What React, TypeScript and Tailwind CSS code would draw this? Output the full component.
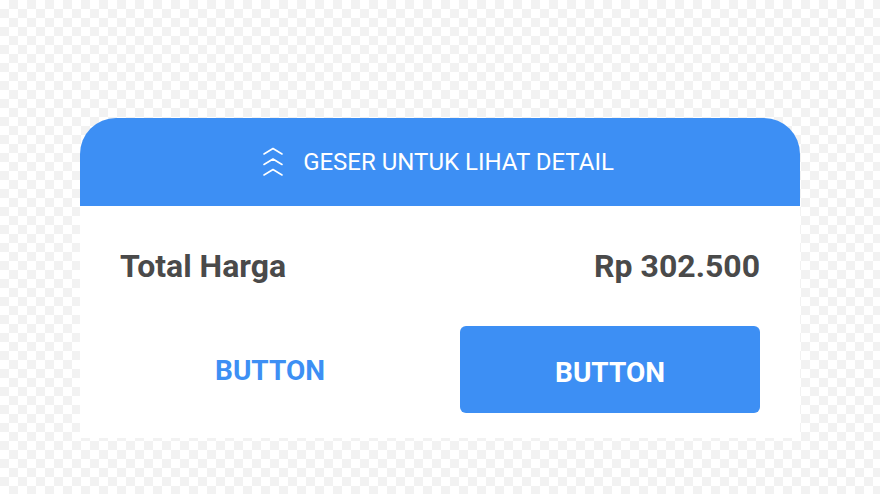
export default function App() {
  return (
    <div
      className="w-[880px] h-[494px] pt-[118px] px-[80px] bg-[conic-gradient(#f2f2f2_25%,#ffffff_0_50%,#f2f2f2_0_75%,#ffffff_0)] bg-size-[18px_18px]"
      style={{ fontFamily: "Roboto, 'Liberation Sans', sans-serif" }}
    >
      <div className="w-[720px]">
        {/* Swipe hint */}
        <div className="h-[88px] rounded-t-[36px] bg-[#3d8ff4] flex items-center justify-center gap-[19px] text-white">
          <svg width="22" height="32" viewBox="0 0 22 32" fill="none" stroke="white" strokeWidth="1.6" strokeLinecap="round" strokeLinejoin="round" className="-ml-[4px]">
            <path d="M2 8 L11 2.5 L20 8" />
            <path d="M2 18.5 L11 13 L20 18.5" />
            <path d="M2 29 L11 23.5 L20 29" />
          </svg>
          <span className="text-[24px] leading-none">GESER UNTUK LIHAT DETAIL</span>
        </div>

        {/* Summary */}
        <div className="bg-white px-[40px] pt-[40px] pb-[25px]">
          <div className="flex items-center justify-between h-[40px] text-[#4a4a4a] font-bold text-[32px]">
            <span>Total Harga</span>
            <span>Rp 302.500</span>
          </div>
          <div className="mt-[40px] grid grid-cols-2 gap-[40px]">
            <button className="h-[87px] pt-[2px] flex items-center justify-center text-[#3d8ff4] font-bold text-[28px]">
              BUTTON
            </button>
            <button className="h-[87px] pt-[6px] rounded-[6px] bg-[#3d8ff4] flex items-center justify-center text-white font-bold text-[28px]">
              BUTTON
            </button>
          </div>
        </div>
      </div>
    </div>
  );
}
